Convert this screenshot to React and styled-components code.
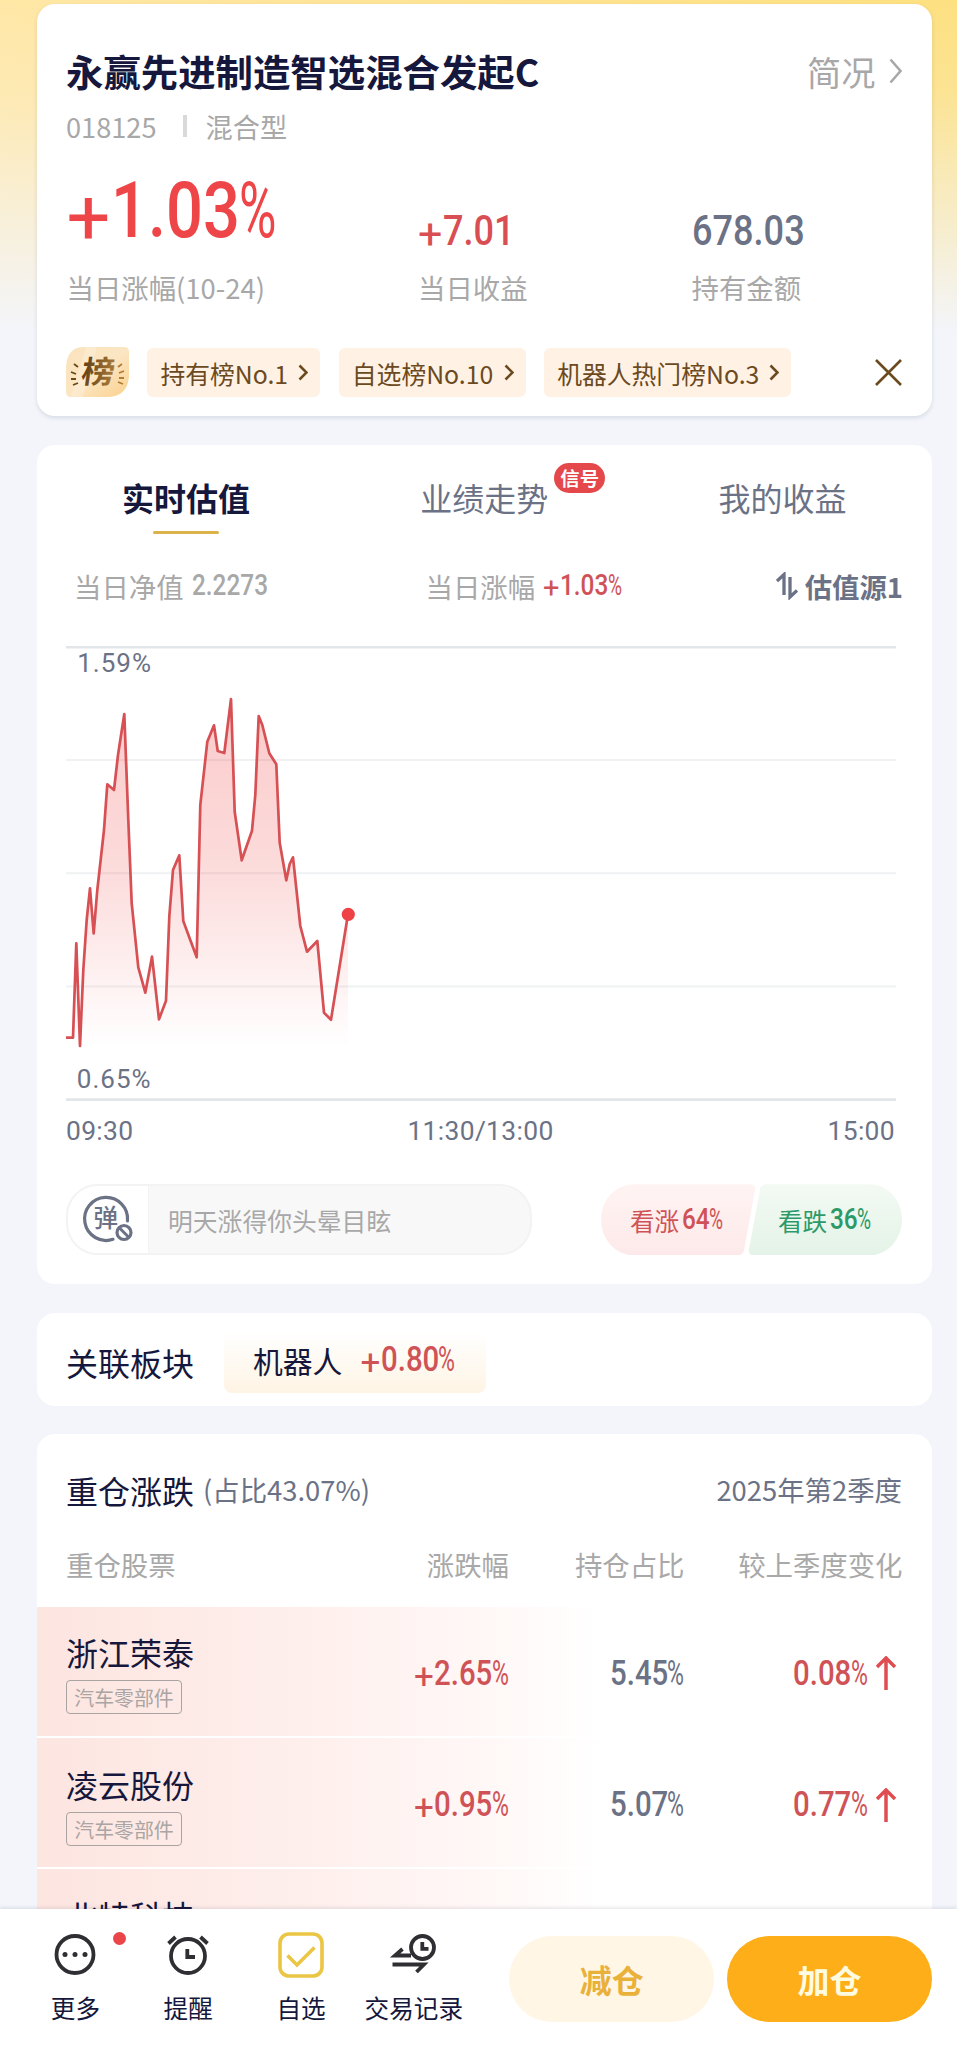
import React from "react";
import styled, { createGlobalStyle, css } from "styled-components";

const GlobalStyle = createGlobalStyle`
  * { box-sizing: border-box; }
  body {
    margin: 0;
    background: #f3f5fb;
    font-family: "Noto Sans CJK SC", "Noto Sans", sans-serif;
    color: #15173c;
  }
`;

const color = {
  ink: "#15173c",
  slate: "#6b7286",
  mute: "#a8a8a8",
  red: "#ee4548",
  softRed: "#cf5356",
  green: "#2b9a68",
  brown: "#6b4a1f",
};

const Page = styled.div`
  width: 957px;
  height: 2048px;
  display: flex;
  flex-direction: column;
  overflow: hidden;
  white-space: nowrap;
  background:
    linear-gradient(to bottom, rgba(243, 245, 251, 0) 0, rgba(243, 245, 251, 0.15) 90px, #f3f5fb 335px),
    linear-gradient(to right, #ffe7a6, #fde080);
`;

const Content = styled.main`
  flex: 1;
  min-height: 0;
  overflow: hidden;
  padding: 4px 25.5px 0 37px;
`;

const Card = styled.section`
  background: #fff;
  border-radius: 18px;
  margin-bottom: 28.7px;
  height: ${(p) => p.$height}px;
  overflow: hidden;
  ${(p) => p.$raised && css`box-shadow: 0 2px 4px rgba(40, 50, 80, 0.13);`}
`;

/* Condensed figures */
const FigureRoot = styled.span`
  display: inline-block;
  font-family: Roboto, sans-serif;
  font-size: ${(p) => p.$size}px;
  line-height: 1;
  font-weight: 500;
  color: ${(p) => p.$color};
`;
const FigurePart = styled.span`
  display: inline-block;
  width: ${(p) => p.$width}em;
  font-weight: ${(p) => p.$weight || 500};
  transform-origin: 0 50%;
  transform: ${(p) => p.$transform};
`;

function Figure({ size, tone, children }) {
  const [, sign, digits, unit] = children.match(/^(\+?)([\d.]+)(%?)$/);
  const count = digits.replace(".", "").length;
  const width = count * 0.468 + (digits.includes(".") ? 0.245 : 0);
  return (
    <FigureRoot $size={size} $color={tone}>
      {sign && (
        <FigurePart $width={0.575} $weight={400} $transform="translateY(0.09em)">{sign}</FigurePart>
      )}
      <FigurePart $width={width} $transform="scaleX(0.84)">{digits}</FigurePart>
      {unit && (
        <FigurePart $width={0.49} $weight={400} $transform="scaleX(0.66)">{unit}</FigurePart>
      )}
    </FigureRoot>
  );
}

/* Fund summary */
const TitleRow = styled.header`
  display: flex;
  justify-content: space-between;
  align-items: center;
  height: 54px;
  margin: 40px 30px 0 29px;
`;
const Title = styled.h1`
  margin: 0;
  font-size: 37.4px;
  line-height: 54px;
  font-weight: 700;
`;
const ProfileLink = styled.a`
  display: flex;
  align-items: center;
  gap: 13px;
  font-size: 34.2px;
  line-height: 54px;
  color: ${color.mute};
`;
const FundMeta = styled.div`
  display: flex;
  align-items: center;
  height: 56px;
  margin: 0 29px;
  font-size: 27.2px;
  color: ${color.mute};
`;
const MetaBar = styled.i`
  width: 4px;
  height: 22px;
  margin: 0 19px 0 26px;
  background: #d9d9d9;
`;
const Stats = styled.div`
  display: grid;
  grid-template-columns: 351.5px 273.5px 1fr;
  margin: 0 30px 41.3px 29.5px;
`;
const StatValue = styled.div`
  height: 98px;
  display: flex;
  align-items: flex-end;
  padding-bottom: ${(p) => (p.$main ? 3 : 0)}px;
`;
const StatLabel = styled.div`
  margin-top: 14.7px;
  font-size: 27.4px;
  line-height: 40px;
  color: ${color.mute};
`;
const RankRow = styled.div`
  display: flex;
  align-items: center;
  margin: 0 30px 0 29px;
  height: 49px;
`;
const RankPill = styled.a`
  display: flex;
  align-items: center;
  justify-content: space-between;
  width: ${(p) => p.$width}px;
  height: 49px;
  margin-left: 18.4px;
  padding: 1px 12px 0 13px;
  border-radius: 6px;
  background: #fff2e5;
  color: ${color.brown};
  font-size: 24.8px;
  line-height: 48px;
`;
const CloseButton = styled.span`
  margin-left: auto;
  display: flex;
`;

/* Valuation card */
const Tabs = styled.nav`
  display: grid;
  grid-template-columns: repeat(3, 1fr);
  height: 90px;
`;
const Tab = styled.div`
  position: relative;
  display: flex;
  flex-direction: column;
  align-items: center;
  padding-top: 28px;
  font-size: 32px;
  line-height: 48px;
  font-weight: ${(p) => (p.$active ? 700 : 400)};
  color: ${(p) => (p.$active ? color.ink : color.slate)};
  &::after {
    content: "";
    width: 66px;
    height: 3.5px;
    margin-top: 10px;
    border-radius: 2px;
    background: ${(p) => (p.$active ? "#dcb34a" : "transparent")};
  }
`;
const SignalBadge = styled.span`
  position: absolute;
  left: 219px;
  top: 18px;
  width: 51px;
  height: 30px;
  border-radius: 15px;
  background: #e5484b;
  color: #fff;
  font-size: 19.4px;
  line-height: 29px;
  font-weight: 700;
  text-align: center;
`;
const QuoteRow = styled.div`
  display: grid;
  grid-template-columns: 351.5px 1fr auto;
  align-items: center;
  height: 40px;
  margin: 31px 28.5px 0 37px;
  font-size: 27.4px;
  line-height: 40px;
  color: ${color.mute};
`;
const Quote = styled.div`
  display: flex;
  align-items: center;
  gap: 8px;
`;
const Source = styled.div`
  display: flex;
  align-items: center;
  gap: 7px;
  color: ${color.slate};
  font-weight: 700;
`;
const ChartSvg = styled.svg`
  display: block;
  margin: 40px 0 0 29px;
  font-family: Roboto, sans-serif;
  font-size: 26px;
  letter-spacing: 1px;
`;
const TimeAxis = styled.div`
  display: flex;
  justify-content: space-between;
  width: 829px;
  margin: 15.5px 0 0 29px;
  font-family: Roboto, sans-serif;
  font-size: 26.4px;
  letter-spacing: 0.35px;
  line-height: 30px;
  color: ${color.slate};
`;
const SentimentRow = styled.div`
  display: flex;
  justify-content: space-between;
  margin: 38px 29px 0;
`;
const Barrage = styled.div`
  display: flex;
  width: 466px;
  height: 71px;
  border: 2.5px solid #f3f3f3;
  border-radius: 32px;
  overflow: hidden;
  background: #f8f8f8;
  color: ${color.mute};
  font-size: 24.8px;
  line-height: 68px;
`;
const BarrageToggle = styled.span`
  flex: 0 0 80px;
  margin-right: 19px;
  background: #fff;
  border-right: 1px solid #f3f3f3;
`;
const Votes = styled.div`
  display: flex;
  width: 301.5px;
`;
const Vote = styled.div`
  display: flex;
  align-items: center;
  gap: 3px;
  height: 71px;
  flex: 0 0 154px;
  padding-left: 29px;
  font-size: 24.6px;
  color: ${color.softRed};
  background: linear-gradient(#fff4f3, #fde9e9);
  clip-path: path("M32 0H149Q155 0 154 6L143 66Q142 71 137 71H32A32 35.5 0 0 1 32 0Z");
  ${(p) => p.$down && css`
    margin-left: -6px;
    flex-basis: 153px;
    color: ${color.green};
    background: linear-gradient(#f3faf4, #e4f3e7);
    clip-path: path("M18 0H121A32 35.5 0 0 1 121 71H5Q-1 71 0 65L11 5Q12 0 18 0Z");
  `}
`;

/* Related sector */
const SectorRow = styled.div`
  display: flex;
  align-items: center;
  margin-top: 12px;
  padding-left: 29px;
`;
const SectionTitle = styled.h2`
  margin: 0;
  font-size: 32px;
  line-height: 48px;
  font-weight: 400;
  color: ${color.ink};
`;
const SectorTitle = styled(SectionTitle)`
  padding-top: 7px;
`;
const SectorChip = styled.a`
  display: flex;
  align-items: center;
  gap: 18px;
  width: 262px;
  height: 68px;
  margin-left: 30px;
  padding: 2px 0 0 29px;
  border-radius: 8px;
  background: linear-gradient(#fff 10%, #fef4e4);
  font-size: 29.8px;
`;

/* Holdings */
const HoldingsHeader = styled.div`
  display: flex;
  align-items: center;
  height: 48px;
  margin: 32px 29.5px 0 29px;
  font-size: 27.4px;
  color: ${color.slate};
`;
const Share = styled.span`
  margin: -3px 0 0 9px;
`;
const Quarter = styled.span`
  margin: -3px 0 0 auto;
`;
const gridColumns = css`
  display: grid;
  grid-template-columns: 251px 192px 175.5px 1fr;
  padding: 0 29px 0 29px;
`;
const ColumnHeads = styled.div`
  ${gridColumns}
  margin-top: 29.5px;
  height: 62.8px;
  font-size: 27.4px;
  line-height: 40px;
  color: ${color.mute};
  text-align: right;
  & > :first-child { text-align: left; }
`;
const HoldingRow = styled.div`
  ${gridColumns}
  align-items: center;
  height: 129px;
  margin-bottom: 2.4px;
  background: linear-gradient(to right, #fde5e0, #feefec 270px, #fff6f5 420px, #fff 568px) no-repeat;
`;
const Stock = styled.div`
  height: 86px;
`;
const StockName = styled.div`
  font-size: 32px;
  line-height: 48px;
  color: ${color.ink};
`;
const IndustryTag = styled.span`
  display: block;
  width: 116px;
  height: 34px;
  margin: 4px 0 0;
  border: 1.4px solid #a9a3a2;
  border-radius: 4px;
  font-size: 19.9px;
  line-height: 33px;
  text-align: center;
  color: #aaa4a3;
`;
const Cell = styled.div`
  display: flex;
  justify-content: flex-end;
  align-items: center;
  gap: 8px;
  padding: 4px ${(p) => p.$inset || 0}px 0 0;
`;

/* Bottom bar */
const BottomBar = styled.footer`
  position: relative;
  display: flex;
  height: 139px;
  padding-left: 19px;
  background: #fff;
  box-shadow: 0 -1px 4px rgba(30, 30, 60, 0.13);
`;
const NavItem = styled.a`
  position: relative;
  width: 112.8px;
  display: flex;
  flex-direction: column;
  align-items: center;
  padding-top: 20px;
  font-size: 24.6px;
  line-height: 36px;
  color: ${color.ink};
  svg { display: block; margin-bottom: 8px; }
`;
const Dot = styled.i`
  position: absolute;
  left: 94px;
  top: 23px;
  width: 13px;
  height: 13px;
  border-radius: 50%;
  background: #ea4649;
`;
const TradeButtons = styled.div`
  display: flex;
  gap: 12.5px;
  margin: 27px 0 0 38.8px;
`;
const TradeButton = styled.button`
  width: 205.3px;
  height: 86px;
  padding: 0;
  border: 0;
  border-radius: 43px;
  font: 700 32px/48px "Noto Sans CJK SC", sans-serif;
  color: ${(p) => (p.$primary ? "#fffbe0" : "#e9b13a")};
  background: ${(p) => (p.$primary ? "#fdae18" : "#fff6e6")};
`;

const Chevron = ({ w, h, stroke, width }) => (
  <svg width={w} height={h} viewBox={`0 0 ${w} ${h}`} fill="none">
    <path d={`M1.5 1.5L${w - 1.5} ${h / 2}L1.5 ${h - 1.5}`} stroke={stroke} strokeWidth={width} />
  </svg>
);

const RankBadge = () => (
  <svg width="63" height="50" viewBox="0 0 63 50">
    <defs>
      <linearGradient id="badge" x1="0" y1="0" x2="1" y2="1">
        <stop offset="0" stopColor="#fae2bd" />
        <stop offset="0.5" stopColor="#fbe6c3" />
        <stop offset="1" stopColor="#fbd08c" />
      </linearGradient>
      <linearGradient id="badgeText" x1="0" y1="0" x2="1" y2="0">
        <stop offset="0" stopColor="#5f3f16" />
        <stop offset="1" stopColor="#ab7a38" />
      </linearGradient>
    </defs>
    <path d="M18 0H58Q63 0 63 5V30Q61 50 41 50H5Q0 50 0 45V20Q1 0 18 0Z" fill="url(#badge)" />
    <path d="M20 0H31L17 50H5Q12 25 20 0Z" fill="#fff" opacity="0.22" />
    <text x="14" y="36.5" fontSize="31" fontWeight="700" fill="url(#badgeText)"
      transform="translate(5.5 0) skewX(-8)" textLength="33" lengthAdjust="spacingAndGlyphs">榜</text>
    <path d="M8 17L12 20M5 25L10 27M5 32L10 32M7 38L12 36" stroke="#6b4717" strokeWidth="1.8" />
    <path d="M56 17L52 20M58 24L53 26M58 31L53 31M57 37L52 35" stroke="#b07c36" strokeWidth="1.8" />
  </svg>
);

const SwapIcon = () => (
  <svg width="22" height="28" viewBox="0 0 22 28" fill="none" stroke={color.slate} strokeWidth="3.3">
    <path d="M1 9L8 2.5V23" />
    <path d="M14 5V25L21 18.5" />
  </svg>
);

const BarrageIcon = () => (
  <svg width="80" height="66" viewBox="0 0 80 66" fill="none" stroke={color.slate}>
    <path d="M59.5 35A21.5 21.5 0 1 0 45 53.3" strokeWidth="3.2" strokeLinecap="round" />
    <text x="25.5" y="40.5" fontSize="24.5" fontWeight="500" fill={color.slate} stroke="none">弹</text>
    <circle cx="56" cy="46.5" r="7" strokeWidth="3.2" fill="#fff" />
    <path d="M51 41.5L61 51.5" strokeWidth="3" />
  </svg>
);

const points = [
  [0, 391.7], [7, 391.7], [10.3, 297.3], [14, 400], [17.3, 324], [20.7, 274], [24, 242.3], [27.7, 287.3],
  [31.3, 244], [38, 184], [41.3, 138.3], [48, 144], [52, 109], [58.3, 68], [62.3, 174], [65.7, 257.3],
  [72.3, 321.3], [79.3, 346.7], [86, 310.7], [93, 373.3], [100, 354.7], [103.3, 270.7], [107, 224],
  [113.3, 209.3], [117.3, 275], [124, 293.3], [130.7, 311.3], [134.3, 159], [141.3, 95.7], [148, 79.3],
  [151.7, 105], [158.3, 107], [165, 53], [168.7, 165.7], [175.7, 214.3], [186, 184.7], [189.3, 149],
  [192.7, 70], [196.3, 79], [203.3, 107.3], [210.3, 118.3], [213.7, 196.7], [220.3, 234.3], [223.7, 218],
  [227, 211.3], [234.3, 280], [241, 305.7], [251.3, 295], [258, 366.7], [265, 373.7], [282, 268.3],
];
const line = points.map((p) => p.join(",")).join(" ");

const Chart = () => (
  <ChartSvg width="840" height="455" viewBox="0 0 840 455">
    <defs>
      <linearGradient id="area" gradientUnits="userSpaceOnUse" x1="0" y1="53" x2="0" y2="401">
        <stop offset="0" stopColor="#f03c3c" stopOpacity="0.27" />
        <stop offset="0.5" stopColor="#f03c3c" stopOpacity="0.18" />
        <stop offset="1" stopColor="#f03c3c" stopOpacity="0" />
      </linearGradient>
    </defs>
    <path d="M0 1.3H830M0 453.6H830" stroke="#e2e6e8" strokeWidth="2.6" />
    <path d="M0 114H830M0 227.3H830M0 340.6H830" stroke="#eff1f2" strokeWidth="2" />
    <polygon points={`${line} 282,401 0,401`} fill="url(#area)" />
    <polyline points={line} fill="none" stroke="#d65054" strokeWidth="2.7" strokeLinejoin="round" />
    <circle cx="282.3" cy="268.3" r="6.6" fill="#ee4246" />
    <text x="11.2" y="25.8" fill={color.slate}>1.59%</text>
    <text x="10.8" y="441.8" fill={color.slate}>0.65%</text>
  </ChartSvg>
);

const UpArrow = () => (
  <svg width="20" height="34" viewBox="0 0 20 34" fill="none" stroke="#df4d50" strokeWidth="3.5">
    <path d="M10 34V2.5M1 11L10 2L19 11" />
  </svg>
);

const holdings = [
  { name: "浙江荣泰", industry: "汽车零部件", change: "+2.65%", weight: "5.45%", diff: "0.08%" },
  { name: "凌云股份", industry: "汽车零部件", change: "+0.95%", weight: "5.07%", diff: "0.77%" },
  { name: "北特科技" },
];

const navStroke = { fill: "none", stroke: "#2e2e33", strokeWidth: 3.8 };

const FundSummary = () => (
  <Card $height={412} $raised>
    <TitleRow>
      <Title>永赢先进制造智选混合发起C</Title>
      <ProfileLink>简况<Chevron w={13} h={26} stroke={color.mute} width={2.6} /></ProfileLink>
    </TitleRow>
    <FundMeta>018125<MetaBar />混合型</FundMeta>
    <Stats>
      <div>
        <StatValue $main><Figure size={77.4} tone={color.red}>+1.03%</Figure></StatValue>
        <StatLabel>当日涨幅(10-24)</StatLabel>
      </div>
      <div>
        <StatValue><Figure size={43} tone="#d94e52">+7.01</Figure></StatValue>
        <StatLabel>当日收益</StatLabel>
      </div>
      <div>
        <StatValue><Figure size={43} tone={color.slate}>678.03</Figure></StatValue>
        <StatLabel>持有金额</StatLabel>
      </div>
    </Stats>
    <RankRow>
      <RankBadge />
      <RankPill $width={173}>持有榜No.1<Chevron w={10} h={17} stroke={color.brown} width={2.6} /></RankPill>
      <RankPill $width={187}>自选榜No.10<Chevron w={10} h={17} stroke={color.brown} width={2.6} /></RankPill>
      <RankPill $width={247}>机器人热门榜No.3<Chevron w={10} h={17} stroke={color.brown} width={2.6} /></RankPill>
      <CloseButton>
        <svg width="27" height="27" viewBox="0 0 27 27" stroke={color.brown} strokeWidth="2.6">
          <path d="M1 1L26 26M26 1L1 26" />
        </svg>
      </CloseButton>
    </RankRow>
  </Card>
);

export default function App() {
  return (
    <Page>
      <GlobalStyle />
      <Content>
        <FundSummary />

        <Card $height={839.3}>
          <Tabs>
            <Tab $active>实时估值</Tab>
            <Tab>业绩走势<SignalBadge>信号</SignalBadge></Tab>
            <Tab>我的收益</Tab>
          </Tabs>
          <QuoteRow>
            <Quote>当日净值<Figure size={29} tone={color.mute}>2.2273</Figure></Quote>
            <Quote>当日涨幅<Figure size={29} tone={color.softRed}>+1.03%</Figure></Quote>
            <Source><SwapIcon />估值源1</Source>
          </QuoteRow>
          <Chart />
          <TimeAxis>
            <span>09:30</span>
            <span>11:30/13:00</span>
            <span>15:00</span>
          </TimeAxis>
          <SentimentRow>
            <Barrage>
              <BarrageToggle><BarrageIcon /></BarrageToggle>
              明天涨得你头晕目眩
            </Barrage>
            <Votes>
              <Vote>看涨<Figure size={29} tone={color.softRed}>64%</Figure></Vote>
              <Vote $down>看跌<Figure size={29} tone={color.green}>36%</Figure></Vote>
            </Votes>
          </SentimentRow>
        </Card>

        <Card $height={93}>
          <SectorRow>
            <SectorTitle>关联板块</SectorTitle>
            <SectorChip>机器人<Figure size={35} tone={color.softRed}>+0.80%</Figure></SectorChip>
          </SectorRow>
        </Card>

        <Card $height={620}>
          <HoldingsHeader>
            <SectionTitle>重仓涨跌</SectionTitle>
            <Share>(占比43.07%)</Share>
            <Quarter>2025年第2季度</Quarter>
          </HoldingsHeader>
          <ColumnHeads>
            <span>重仓股票</span>
            <span>涨跌幅</span>
            <span>持仓占比</span>
            <span>较上季度变化</span>
          </ColumnHeads>
          {holdings.map(({ name, industry, change, weight, diff }) => (
            <HoldingRow key={name}>
              <Stock>
                <StockName>{name}</StockName>
                {industry && <IndustryTag>{industry}</IndustryTag>}
              </Stock>
              {change && <Cell><Figure size={35} tone={color.softRed}>{change}</Figure></Cell>}
              {weight && <Cell><Figure size={35} tone={color.slate}>{weight}</Figure></Cell>}
              {diff && (
                <Cell $inset={6.5}>
                  <Figure size={35} tone={color.softRed}>{diff}</Figure>
                  <UpArrow />
                </Cell>
              )}
            </HoldingRow>
          ))}
        </Card>
      </Content>

      <BottomBar>
        <NavItem>
          <svg width="52" height="52" viewBox="0 0 52 52">
            <circle cx="26" cy="25.5" r="18.5" {...navStroke} />
            <g fill="#2e2e33">
              <circle cx="16" cy="25.5" r="2.5" />
              <circle cx="26" cy="25.5" r="2.5" />
              <circle cx="36" cy="25.5" r="2.5" />
            </g>
          </svg>
          更多
          <Dot />
        </NavItem>
        <NavItem>
          <svg width="52" height="52" viewBox="0 0 52 52" {...navStroke}>
            <circle cx="26" cy="27" r="17" />
            <path d="M25.3 20V28H33M6.5 14.5L13.5 8M45.5 14.5L38.5 8" />
          </svg>
          提醒
        </NavItem>
        <NavItem>
          <svg width="52" height="52" viewBox="0 0 52 52" fill="none" stroke="#ebc544" strokeWidth="3.6">
            <rect x="5" y="5" width="42" height="42" rx="9" />
            <path d="M12.5 26.5L22 36L39.5 18.5" />
          </svg>
          自选
        </NavItem>
        <NavItem>
          <svg width="52" height="52" viewBox="0 0 52 52" {...navStroke}>
            <circle cx="34.5" cy="18.5" r="11.5" />
            <path d="M34.3 13V19.8H40.5M23 26.5H7L14.5 20M4.5 35.5H36L28.5 43" />
          </svg>
          交易记录
        </NavItem>
        <TradeButtons>
          <TradeButton>减仓</TradeButton>
          <TradeButton $primary>加仓</TradeButton>
        </TradeButtons>
      </BottomBar>
    </Page>
  );
}
